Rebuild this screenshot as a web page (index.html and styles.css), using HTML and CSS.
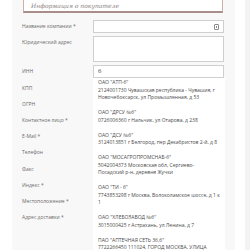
FILE: index.html
```html
<!DOCTYPE html>
<html lang="ru">
<head>
    <meta charset="UTF-8">
    <title>Информация о покупателе</title>
    <link rel="stylesheet" href="styles.css">
</head>
<body>
    <div class="layout">
        <div class="panel">
            <div class="panel-title">Информация о покупателе</div>

            <form class="form">
                <label class="form-label">Название компании *</label>
                <div class="form-control has-icon"><span class="field-icon"></span></div>

                <label class="form-label">Юридический адрес</label>
                <div class="form-control textarea"></div>

                <label class="form-label">ИНН</label>
                <div class="field-wrap">
                    <div class="form-control">6</div>
                    <ul class="suggest">
                        <li>ОАО "АТП-6"<br>2124001730 Чувашская республика - Чувашия, г Новочебоксарск, ул Промышленная, д 53</li>
                        <li>ОАО "ДРСУ №6"<br>0726006360 г Нальчик, ул Отарова, д 238</li>
                        <li>ОАО "ДСУ №6"<br>3124013851 г Белгород, пер Декабристов 2-й, д 8</li>
                        <li>ОАО "МОСАГРОПРОМСНАБ-6"<br>5042004373 Московская обл, Сергиево-Посадский р-н, деревня Жучки</li>
                        <li>ОАО "ТИ - 6"<br>7743853298 г Москва, Волоколамское шоссе, д 1 к 1</li>
                        <li>ОАО "ХЛЕБОЗАВОД №6"<br>3015000425 г Астрахань, ул Ленина, д 7</li>
                        <li>ПАО "АПТЕЧНАЯ СЕТЬ 36.6"<br>7722266450 111024, ГОРОД МОСКВА, УЛИЦА АВИАМОТОРНАЯ</li>
                    </ul>
                </div>

                <label class="form-label">КПП</label>
                <div class="form-control"></div>
                <label class="form-label">ОГРН</label>
                <div class="form-control"></div>
                <label class="form-label">Контактное лицо *</label>
                <div class="form-control"></div>
                <label class="form-label">E-Mail *</label>
                <div class="form-control"></div>
                <label class="form-label">Телефон</label>
                <div class="form-control"></div>
                <label class="form-label">Факс</label>
                <div class="form-control"></div>
                <label class="form-label">Индекс *</label>
                <div class="form-control"></div>
                <label class="form-label">Местоположение *</label>
                <div class="form-control"></div>
                <label class="form-label">Адрес доставки *</label>
                <div class="form-control"></div>
            </form>
        </div>
        <div class="gutter"></div>
        <div class="sidebar"></div>
    </div>
</body>
</html>
```

FILE: styles.css
```css
:root {
    --panel-bg: #f8f8f8;
    --side-bg: #f3f3f3;
    --border: #cfcfcf;
    --label: #6b6b6b;
    --text: #4a4a4a;
    --title-border: #cbb0ad;
    --title-line: #a88d89;
}

* {
    margin: 0;
    padding: 0;
    box-sizing: border-box;
}

body {
    font-family: 'Open Sans', 'Liberation Sans', sans-serif;
    font-size: 5px;
    background: #fff;
    color: var(--text);
    height: 250px;
    overflow: hidden;
}

.layout {
    display: flex;
    height: 250px;
    padding-left: 12px;
}

.panel {
    width: 223px;
    background: var(--panel-bg);
    padding: 0 11px 0 10px;
}

.gutter {
    width: 10px;
    background: #fff;
}

.sidebar {
    flex: 1;
    background: var(--side-bg);
}

.panel-title {
    height: 17px;
    margin: -4px 1px 0 1px;
    padding: 5px 7px 0;
    background: #fff;
    border: 1px solid var(--title-border);
    border-bottom: 2px solid var(--title-line);
    font-family: 'DejaVu Serif', 'Liberation Serif', serif;
    font-style: italic;
    font-size: 6px;
    color: #8a8080;
}

.form {
    display: grid;
    grid-template-columns: 71px 131px;
    row-gap: 3.2px;
    margin-top: 7px;
}

.form-label {
    line-height: 13px;
    color: var(--label);
}

.form-control {
    height: 13px;
    background: #fff;
    border: 1px solid var(--border);
    padding: 0 4px;
    line-height: 11px;
    font-size: 6px;
    color: #333;
}

.form-control.textarea {
    height: 26px;
}

.has-icon {
    display: flex;
    justify-content: flex-end;
    align-items: center;
}

.field-icon {
    width: 5px;
    height: 6px;
    border: 1px solid #8a8a8a;
    border-radius: 1px;
    position: relative;
}

.field-icon::after {
    content: '';
    position: absolute;
    left: 1px;
    top: 1px;
    width: 1px;
    height: 2px;
    background: #8a8a8a;
}

.field-wrap {
    position: relative;
}

.suggest {
    position: absolute;
    top: 13px;
    left: 0;
    width: 132px;
    background: #fff;
    list-style: none;
    z-index: 10;
    padding-bottom: 20px;
}

.suggest li {
    padding: 4px 5px 3.5px;
    line-height: 7.5px;
    color: var(--text);
}

.suggest li:first-child {
    padding-top: 1px;
}
```
